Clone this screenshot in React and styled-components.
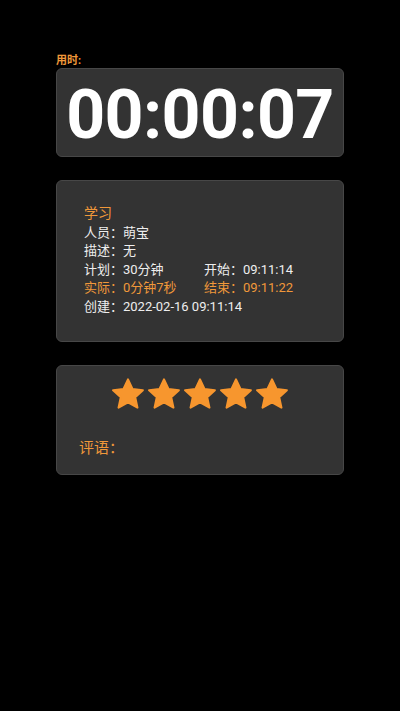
import React from "react";
import styled, { createGlobalStyle } from "styled-components";

const GlobalStyle = createGlobalStyle`
	html, body {
		margin: 0;
		padding: 0;
		background: #000;
	}
	body {
		font-family: Roboto, "Noto Sans CJK SC", sans-serif;
	}
`;

const Page = styled.div`
	min-height: 711px;
	background: #000;
	padding: 53px 56px 0;
	box-sizing: border-box;
	display: flex;
	flex-direction: column;
`;

const SmallLabel = styled.div`
	color: #f0983a;
	font-size: 11px;
	font-weight: 700;
	line-height: 15px;
`;

const Card = styled.div`
	background: #333333;
	border: 1px solid #474747;
	border-radius: 6px;
	box-sizing: border-box;
	margin-top: ${({ gap }) => gap || 0}px;
	height: ${({ h }) => h}px;
`;

const TimerCard = styled(Card)`
	display: flex;
	align-items: center;
	justify-content: center;
`;

const Timer = styled.div`
	color: #fff;
	font-family: Roboto, sans-serif;
	font-weight: 700;
	font-size: 68px;
	line-height: 1;
	padding-top: 4px;
	letter-spacing: -0.6px;
`;

const InfoCard = styled(Card)`
	padding: 22px 20px 0 27px;
`;

const Title = styled.div`
	color: #f0983a;
	font-size: 14px;
	line-height: 21px;
`;

const Row = styled.div`
	display: flex;
	font-size: 13px;
	line-height: 18.4px;
	color: ${({ accent }) => (accent ? "#f0983a" : "#eeeeee")};
`;

const Cell = styled.div`
	width: ${({ w }) => (w ? `${w}px` : "auto")};
	white-space: nowrap;
`;

const RateCard = styled(Card)`
	padding: 12px 0 0 22px;
`;

const Stars = styled.div`
	display: flex;
	justify-content: center;
	gap: 4px;
	margin-left: -22px;
`;

const Comment = styled.div`
	color: #f0983a;
	font-size: 15px;
	line-height: 20px;
	margin-top: 28px;
`;

function Star() {
	return (
		<svg width="32" height="32" viewBox="2 2 20 20">
			<path
				d="M12 2.9l2.8 6 6.5.7-4.8 4.4 1.4 6.5L12 17.2l-5.9 3.3 1.4-6.5-4.8-4.4 6.5-.7z"
				fill="#f7962e"
				stroke="#f7962e"
				strokeWidth="1.3"
				strokeLinejoin="round"
			/>
		</svg>
	);
}

export default function App() {
	return (
		<>
			<GlobalStyle />
			<Page>
				<SmallLabel>用时:</SmallLabel>
				<TimerCard h={89}>
					<Timer>00:00:07</Timer>
				</TimerCard>

				<InfoCard gap={23} h={162}>
					<Title>学习</Title>
					<Row>
						<Cell>人员：萌宝</Cell>
					</Row>
					<Row>
						<Cell>描述：无</Cell>
					</Row>
					<Row>
						<Cell w={120}>计划：30分钟</Cell>
						<Cell>开始：09:11:14</Cell>
					</Row>
					<Row accent>
						<Cell w={120}>实际：0分钟7秒</Cell>
						<Cell>结束：09:11:22</Cell>
					</Row>
					<Row>
						<Cell>创建：2022-02-16 09:11:14</Cell>
					</Row>
				</InfoCard>

				<RateCard gap={23} h={110}>
					<Stars>
						{[0, 1, 2, 3, 4].map((i) => (
							<Star key={i} />
						))}
					</Stars>
					<Comment>评语：</Comment>
				</RateCard>
			</Page>
		</>
	);
}
